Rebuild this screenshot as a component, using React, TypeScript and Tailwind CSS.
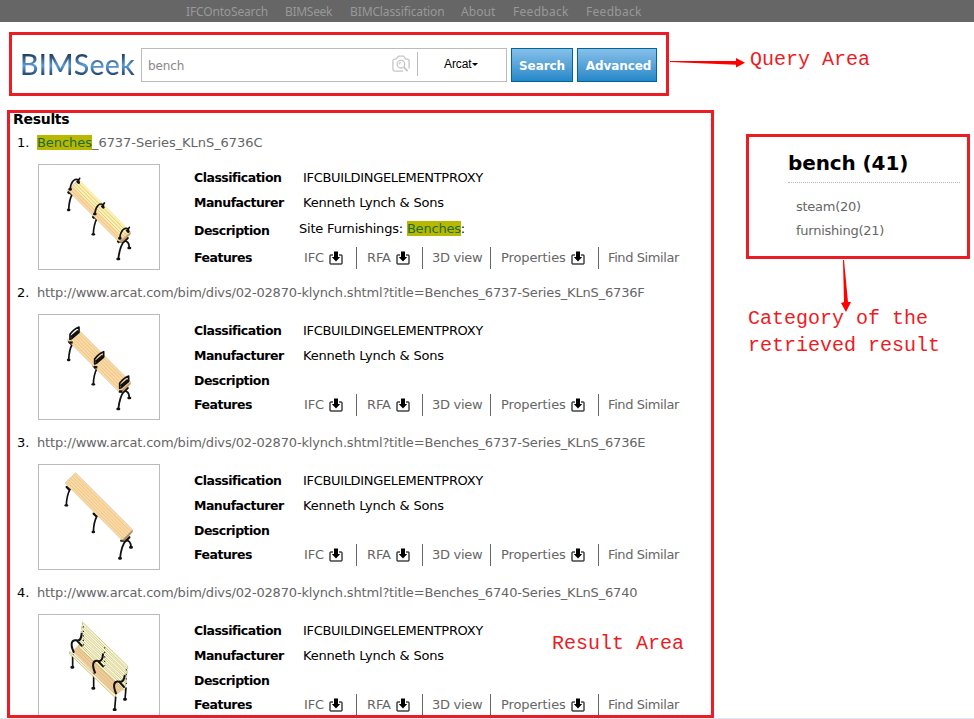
import type { ReactNode } from "react";

function DownloadIcon() {
  return (
    <svg className="ml-[5px] h-[14px] w-[14px] shrink-0" viewBox="0 0 14 14">
      <path d="M4 4H1.8L1 4.8v7.4l.8.8h10.4l.8-.8V4.8l-.8-.8H10" fill="none" stroke="#444" strokeWidth="1.5" />
      <path d="M5 0.5h4V6h2.2L7 10.6 2.8 6H5z" fill="#000" />
    </svg>
  );
}

function CameraIcon() {
  return (
    <svg className="mb-[3px] h-[18px] w-[18px] shrink-0" viewBox="0 0 18 18" fill="none" stroke="#c6c6c6" strokeWidth="1.3">
      <path d="M11 16.2H2.9c-1.2 0-2-.8-2-2V6.1c0-1.2.8-2 2-2h1.3L6.4 1.2h5.2l2.2 2.9h1.3c1.2 0 2 .8 2 2v7.5" />
      <circle cx="8.9" cy="9.2" r="3.8" />
      <path d="M7.3 9.2c0-.9.7-1.6 1.6-1.6" />
      <path d="M11.8 12.2l3.8 3.9" strokeWidth="1.8" />
    </svg>
  );
}

function Foot({ x, y, kind }: { x: number; y: number; kind: "single" | "pair" }) {
  return (
    <g transform={`translate(${x} ${y})`} fill="none" stroke="#111" strokeLinecap="round">
      {kind === "single" ? (
        <>
          <path d="M11 -48Q1 -30 0 0" strokeWidth="5" />
          <path d="M1 -55l7 7" strokeWidth="7" />
          <path d="M-2 0h4" strokeWidth="7" />
        </>
      ) : (
        <>
          <path d="M18 -54Q4 -38 0 0M14 -54Q33 -56 33 -33" strokeWidth="5.5" />
          <path d="M4 -53h14l10 -10" strokeWidth="7" />
          <path d="M-2 0h4M31 -33h4" strokeWidth="8" />
        </>
      )}
    </g>
  );
}

function Hoop({ x, y, filled }: { x: number; y: number; filled: boolean }) {
  return filled ? (
    <g transform={`translate(${x} ${y})`} fill="none" stroke="#111" strokeLinejoin="round">
      <path d="M0 0V-15Q11 -31 27 -37V-21L5 -2Z" strokeWidth="5" />
      <path d="M3 -6L25 -25" strokeWidth="8" />
      <path d="M-2 9L8 10" strokeWidth="7" />
    </g>
  ) : (
    <g transform={`translate(${x} ${y})`} fill="none" stroke="#111" strokeLinecap="round">
      <path d="M0 0C3 -22 13 -35 26 -28V-20M26 -28L29 -33" strokeWidth="5" />
      <path d="M-1 0h3M23 -23l3 3" strokeWidth="8" />
      <path d="M-6 9l3 3" strokeWidth="5" />
    </g>
  );
}

function Thumb({ variant }: { variant: number }) {
  const stripes = [1, 2, 3, 4, 5];
  return (
    <svg className="h-[104px] w-[120px]" viewBox="27 15 360 312">
      {variant === 3 ? (
        <>
          <path d="M128 132V172M191 186V234" stroke="#111" strokeWidth="5" />
          <path d="M125 172h4M188 235h4" stroke="#111" strokeWidth="8" strokeLinecap="round" />
          <path d="M126 124L148 103L284 236L257 256Z" fill="#f0cb9a" />
          {[1, 2, 3].map((i) => (
            <path key={i} d={`M${126 + i * 6} ${124 - i * 5}l132 131`} stroke="#d3a877" strokeWidth="1.5" />
          ))}
          <path d="M119 124L257 254V264L119 132Z" fill="#fff6b4" stroke="#8f8b70" strokeWidth="1.5" />
          {[0, 1, 2, 3, 4, 5].map((i) => (
            <path
              key={i}
              d={`M${157 - i * 2} ${36 + i * 13.5}L${293 - i * 1.5} ${168 + i * 13}v9L${157 - i * 2} ${45 + i * 13.5}Z`}
              fill="#fffaba"
              stroke="#9c986f"
              strokeWidth="1.6"
            />
          ))}
          <path d="M160 49v58M224 112v56M289 178v48" stroke="#222" strokeWidth="3.5" strokeDasharray="3.5 10" />
          <g fill="none" stroke="#111" strokeWidth="6" strokeLinecap="round">
            <path d="M131 126C119 100 126 88 140 91C151 94 154 83 155 71M140 91L155 107" />
            <path d="M195 188C184 162 190 150 204 153C215 156 218 145 219 133M204 153L219 169" />
            <path d="M258 250C247 224 253 212 267 215C278 218 283 207 284 197M267 215L282 231" />
            <path d="M257 262L254 298M288 234L285 267" strokeWidth="5" />
            <path d="M252 299h4M283 268h4" strokeWidth="8" />
          </g>
        </>
      ) : variant === 2 ? (
        <>
          <Foot x={109} y={136} kind="single" />
          <Foot x={190} y={216} kind="single" />
          <Foot x={270} y={295} kind="pair" />
          <path d="M105 69L137 38L308 209L276 241Z" fill="#fad9a2" stroke="#b9a585" strokeWidth="1" />
          {stripes.map((i) => (
            <path key={i} d={`M${105 + i * 5.3} ${69 - i * 5.2}l171 172`} stroke="#dfb47c" strokeWidth="1.6" />
          ))}
          <path d="M276 241L308 209v7L283 243Z" fill="#a98a62" />
        </>
      ) : (
        <>
          <Foot x={116} y={150} kind="single" />
          <Foot x={190} y={223} kind="single" />
          <Foot x={265} y={297} kind="pair" />
          <path d="M112 90L146 59L302 216L267 246Z" fill="#fad9a2" stroke="#b9a585" strokeWidth="1" />
          {variant === 0 && <path d="M127 78L148 60L296 209L276 229Z" fill="#fff2ac" />}
          {stripes.map((i) => (
            <path
              key={i}
              d={`M${112 + i * 5.7} ${90 - i * 5.2}l155 156`}
              stroke={variant === 0 && i > 2 ? "#b8a67c" : "#dfb47c"}
              strokeWidth="1.7"
            />
          ))}
          <path d="M267 246L302 216v7L278 246Z" fill="#c59b65" />
          <Hoop x={120} y={88} filled={variant === 1} />
          <Hoop x={194} y={162} filled={variant === 1} />
          <Hoop x={269} y={235} filled={variant === 1} />
        </>
      )}
    </svg>
  );
}

function Mark({ children }: { children: ReactNode }) {
  return <span className="bg-[#b8b800] text-[#1a6b3c]">{children}</span>;
}

function Label({ children }: { children: ReactNode }) {
  return <b className="w-[105px] shrink-0 text-[12.5px] tracking-[-0.5px]">{children}</b>;
}

function Features() {
  return (
    <div className="flex h-[22px] text-[#666]">
      <span className="flex w-[58px] items-center border-r border-[#666] pl-[5px]">
        IFC <DownloadIcon />
      </span>
      <span className="flex w-[66px] items-center border-r border-[#666] pl-[10px]">
        RFA <DownloadIcon />
      </span>
      <span className="flex w-[68px] items-center border-r border-[#666] pl-[9px] tracking-[-0.3px]">3D view</span>
      <span className="flex w-[108px] items-center border-r border-[#666] pl-[10px]">
        Properties <DownloadIcon />
      </span>
      <span className="flex items-center pl-[9px] tracking-[-0.4px]">Find Similar</span>
    </div>
  );
}

function Result({ n, title, first }: { n: number; title: ReactNode; first?: boolean }) {
  return (
    <li className="h-[150px] shrink-0 pl-[7px]">
      <div className="flex h-[18px] items-center">
        <span className="w-5">{n}.</span>
        <span className={first ? "tracking-[-0.05px] text-[#666]" : "tracking-[-0.17px] text-[#666]"}>{title}</span>
      </div>
      <div className="mt-[12px] flex pl-[21px]">
        <div className="h-[106px] w-[122px] border border-[#bbb]">
          <Thumb variant={n - 1} />
        </div>
        <div className={first ? "ml-[34px] pt-px" : "ml-[34px] pt-[4px]"}>
          <div className="flex h-[25px] items-center">
            <Label>Classification</Label>
            <span className="pl-1 tracking-[-0.33px]">IFCBUILDINGELEMENTPROXY</span>
          </div>
          <div className="flex h-[25px] items-center">
            <Label>Manufacturer</Label>
            <span className="pl-1 tracking-[-0.2px]">Kenneth Lynch &amp; Sons</span>
          </div>
          <div className={first ? "flex h-[31px] items-center" : "flex h-[25px] items-center"}>
            <Label>Description</Label>
            {first && (
              <span className="pb-1 tracking-[-0.2px]">
                Site Furnishings: <Mark>Benches</Mark>:
              </span>
            )}
          </div>
          <div className="flex h-[24px] items-center">
            <Label>Features</Label>
            <Features />
          </div>
        </div>
      </div>
    </li>
  );
}

const nav: [string, string][] = [
  ["IFCOntoSearch", "w-[99px] tracking-[-0.15px]"],
  ["BIMSeek", "w-[65px] tracking-[-0.3px]"],
  ["BIMClassification", "w-[111px] tracking-[-0.12px]"],
  ["About", "w-[52px] tracking-[0.1px]"],
  ["Feedback", "w-[73px] tracking-[0.3px]"],
  ["Feedback", "w-[73px] tracking-[0.3px]"],
];

export default function App() {
  return (
    <div className="relative h-[719px] w-[974px] overflow-hidden border-b border-[#dfe6f5] bg-white font-['DejaVu_Sans',sans-serif] text-[13px] leading-[16px] tracking-[-0.1px] whitespace-nowrap text-black">
      <nav className="flex h-[22px] items-center bg-[#666] pt-[2px] pl-[186px] font-['Noto_Sans',sans-serif] text-[12px] text-[#999]">
        {nav.map(([name, style], i) => (
          <a key={i} className={style}>
            {name}
          </a>
        ))}
      </nav>

      <header className="flex pt-[10px] pl-[9px]">
        <div className="flex h-[64px] w-[660px] items-start border-3 border-[#ed1c24] pt-[13px] pl-[9px]">
          <div className="-mt-px -ml-px w-[121px] bg-linear-to-b from-[#1f3a58] from-20% via-[#5b9bd5] via-55% to-[#1f3f63] to-85% bg-clip-text font-['Lato',sans-serif] text-[28.5px] leading-[34px] font-medium tracking-[0.2px] text-transparent">
            BIMSeek
          </div>
          <div className="flex h-[34px] w-[366px] items-center border border-[#bbb] pl-[6px]">
            <span className="w-[244px] pt-[2px] text-[12px] text-[#888]">bench</span>
            <CameraIcon />
            <span className="mb-[2px] ml-[7px] h-6 w-px bg-[#bbb]" />
            <span className="mb-[2px] ml-[26px] font-['Liberation_Sans',sans-serif] text-[12px]">Arcat</span>
            <span className="mb-[2px] border-x-[3px] border-t-[3px] border-x-transparent border-t-black" />
          </div>
          <button className="ml-1 h-[34px] w-[62px] border border-[#00659b] bg-linear-to-b from-[#85c0e8] to-[#2188c9] pt-[2px] text-[12px] font-bold tracking-[-0.1px] text-white">
            Search
          </button>
          <button className="ml-1 h-[34px] w-[80px] border border-[#00659b] bg-linear-to-b from-[#85c0e8] to-[#2188c9] pt-[2px] pl-[3px] text-[12px] font-bold tracking-[-0.1px] text-white">
            Advanced
          </button>
        </div>
        <svg className="mt-[20px] h-[20px] w-[81px]" viewBox="0 0 81 20">
          <path d="M1 9L67 9V6L76 10.8L67 15.5V12.8L1 10Z" fill="#f00" />
        </svg>
        <div className="mt-[16px] font-['Liberation_Mono',monospace] text-[20px] leading-[24px] tracking-[0px] text-[#ed1c24]">
          Query Area
        </div>
      </header>

      <main className="flex pt-[14px] pl-[7px]">
        <section className="h-[608px] w-[707px] overflow-hidden border-3 border-[#ed1c24]">
          <h1 className="h-[21px] pl-[3px] text-[14px] leading-[13px] font-bold tracking-[-0.3px]">Results</h1>
          <ol className="flex flex-col">
            <Result
              n={1}
              first
              title={
                <>
                  <Mark>Benches</Mark>_6737-Series_KLnS_6736C
                </>
              }
            />
            <Result n={2} title="http://www.arcat.com/bim/divs/02-02870-klynch.shtml?title=Benches_6737-Series_KLnS_6736F" />
            <Result n={3} title="http://www.arcat.com/bim/divs/02-02870-klynch.shtml?title=Benches_6737-Series_KLnS_6736E" />
            <Result n={4} title="http://www.arcat.com/bim/divs/02-02870-klynch.shtml?title=Benches_6740-Series_KLnS_6740" />
          </ol>
        </section>

        <aside className="ml-[32px] pt-[24px]">
          <div className="h-[125px] w-[224px] border-3 border-[#ed1c24] pl-[39px]">
            <h2 className="h-[46px] w-[172px] border-b border-dotted border-[#bbb] pt-[14px] text-[20px] leading-[24px] font-bold tracking-[-0.1px]">
              bench (41)
            </h2>
            <ul className="pt-[12px] pl-2 leading-[24px] tracking-[-0.25px] text-[#666]">
              <li>steam(20)</li>
              <li>furnishing(21)</li>
            </ul>
          </div>
          <svg className="ml-[90px] h-[54px] w-[20px]" viewBox="0 0 20 54">
            <path d="M7 1h1L12 43h3L10 53L5 44l3-1Z" fill="#f00" />
          </svg>
          <p className="-mt-[8px] ml-[2px] font-['Liberation_Mono',monospace] text-[20px] leading-[27px] tracking-[0px] text-[#ed1c24]">
            Category of the
            <br />
            retrieved result
          </p>
        </aside>
      </main>

      <div className="absolute top-[632px] left-[552px] font-['Liberation_Mono',monospace] text-[20px] leading-[24px] tracking-[0px] text-[#ed1c24]">
        Result Area
      </div>
    </div>
  );
}
